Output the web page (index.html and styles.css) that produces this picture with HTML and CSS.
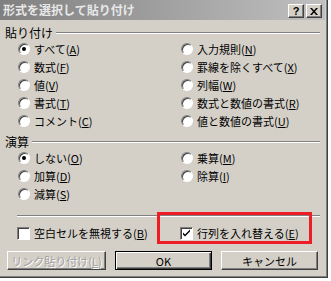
FILE: index.html
```html
<!DOCTYPE html>
<html lang="ja">
  <head>
    <meta charset="UTF-8" />
    <title>形式を選択して貼り付け</title>
    <link rel="stylesheet" href="styles.css">
  </head>
  <body>
    <div class="dialog">
      <div class="titlebar">
        <span class="title">形式を選択して貼り付け</span>
        <div class="title-buttons">
          <span class="tbtn">?</span>
          <span class="tbtn">
            <svg width="8" height="7" viewBox="0 0 8 7"><path d="M0 0h2l2 2.5 2-2.5h2l-3 3.5 3 3.5h-2l-2-2.5-2 2.5h-2l3-3.5z" fill="#000"/></svg>
          </span>
        </div>
      </div>

      <div class="content">
        <div class="group-label"><span>貼り付け</span><i class="rule"></i></div>
        <div class="options">
          <label class="opt"><span class="radio on"></span>すべて(<u>A</u>)</label>
          <label class="opt"><span class="radio"></span>入力規則(<u>N</u>)</label>
          <label class="opt"><span class="radio"></span>数式(<u>F</u>)</label>
          <label class="opt"><span class="radio"></span>罫線を除くすべて(<u>X</u>)</label>
          <label class="opt"><span class="radio"></span>値(<u>V</u>)</label>
          <label class="opt"><span class="radio"></span>列幅(<u>W</u>)</label>
          <label class="opt"><span class="radio"></span>書式(<u>T</u>)</label>
          <label class="opt"><span class="radio"></span>数式と数値の書式(<u>R</u>)</label>
          <label class="opt"><span class="radio"></span>コメント(<u>C</u>)</label>
          <label class="opt"><span class="radio"></span>値と数値の書式(<u>U</u>)</label>
        </div>

        <div class="group-label second"><span>演算</span><i class="rule"></i></div>
        <div class="options">
          <label class="opt"><span class="radio on"></span>しない(<u>O</u>)</label>
          <label class="opt"><span class="radio"></span>乗算(<u>M</u>)</label>
          <label class="opt"><span class="radio"></span>加算(<u>D</u>)</label>
          <label class="opt"><span class="radio"></span>除算(<u>I</u>)</label>
          <label class="opt"><span class="radio"></span>減算(<u>S</u>)</label>
        </div>

        <div class="separator"></div>

        <div class="checks">
          <label class="opt"><span class="checkbox"></span>空白セルを無視する(<u>B</u>)</label>
          <label class="opt">
            <span class="checkbox">
              <svg width="9" height="9" viewBox="0 0 9 9"><path d="M1 3.5l2 2 5-5v2l-5 5-2-2z" fill="#000"/></svg>
            </span>行列を入れ替える(<u>E</u>)
          </label>
          <div class="highlight"></div>
        </div>

        <div class="buttons">
          <button class="btn disabled">リンク貼り付け(<u>L</u>)</button>
          <button class="btn default">OK</button>
          <button class="btn">キャンセル</button>
        </div>
      </div>
    </div>
  </body>
</html>
```

FILE: styles.css
```css
/* Classic Windows dialog */
body {
  margin: 0;
  background: #fff;
  font-family: "Noto Sans CJK JP", "Noto Sans", sans-serif;
  font-size: 11px;
  color: #000;
}

.dialog {
  width: 327px;
  height: 277px;
  background: #d4d0c8;
  border-right: 1px solid #404040;
  border-bottom: 1px solid #404040;
  box-shadow: inset -1px -1px 0 #808080;
  display: flex;
  flex-direction: column;
}

.titlebar {
  height: 20px;
  margin-right: 2px;
  background: linear-gradient(to right, #808080, #c0c0c0);
  display: flex;
  align-items: center;
  justify-content: space-between;
  padding-left: 3px;
}

.title {
  color: #e8e8e8;
  font-weight: bold;
  font-size: 12px;
  line-height: 14px;
}

.title-buttons {
  display: flex;
  gap: 2px;
  padding-right: 3px;
  padding-top: 2px;
}

.tbtn {
  width: 16px;
  height: 14px;
  box-sizing: border-box;
  background: #d4d0c8;
  border: 1px solid;
  border-color: #fff #404040 #404040 #fff;
  box-shadow: inset -1px -1px 0 #808080;
  display: flex;
  align-items: center;
  justify-content: center;
  font-weight: bold;
  font-size: 11px;
  line-height: 12px;
  font-family: "Liberation Sans", sans-serif;
}

.content {
  padding: 0 7px 0 5px;
  display: flex;
  flex-direction: column;
}

.group-label {
  display: flex;
  align-items: center;
  height: 14px;
  margin-top: 6px;
  line-height: 14px;
  font-size: 12px;
}

.group-label.second {
  margin-top: 5px;
}

.rule {
  flex: 1;
  height: 0;
  border-top: 1px solid #808080;
  border-bottom: 1px solid #fff;
  margin-left: 3px;
}

.options {
  display: grid;
  grid-template-columns: 163px 1fr;
  grid-auto-rows: 18px;
  padding-left: 13px;
}

.opt {
  display: flex;
  align-items: center;
  line-height: 18px;
  white-space: nowrap;
}

u {
  text-decoration: underline;
  text-underline-offset: 1px;
}

.radio {
  width: 12px;
  height: 12px;
  box-sizing: border-box;
  border-radius: 50%;
  background: #fff;
  border: 1px solid;
  border-color: #808080 #fff #fff #808080;
  box-shadow: inset 1px 1px 0 #404040;
  margin-right: 4px;
  position: relative;
}

.radio.on::after {
  content: "";
  position: absolute;
  left: 3px;
  top: 3px;
  width: 4px;
  height: 4px;
  border-radius: 50%;
  background: #000;
}

.separator {
  margin-top: 12px;
  margin-left: 12px;
  border-top: 1px solid #808080;
  border-bottom: 1px solid #fff;
}

.checks {
  position: relative;
  display: grid;
  grid-template-columns: 163px 1fr;
  height: 18px;
  margin-top: 7px;
  padding-left: 12px;
}

.checkbox {
  width: 13px;
  height: 13px;
  box-sizing: border-box;
  background: #fff;
  border: 1px solid;
  border-color: #808080 #fff #fff #808080;
  box-shadow: inset 1px 1px 0 #404040;
  margin-right: 4px;
  display: flex;
  align-items: center;
  justify-content: center;
}

.highlight {
  position: absolute;
  left: 152px;
  top: -12px;
  width: 155px;
  height: 32px;
  box-sizing: border-box;
  border: 3px solid #ee1c24;
}

.buttons {
  display: flex;
  margin-top: 9px;
  padding-left: 2px;
  gap: 9px;
}

.btn {
  height: 19px;
  width: 97px;
  padding: 0;
  font-family: inherit;
  font-size: 11px;
  white-space: nowrap;
  background: #d4d0c8;
  border: 1px solid;
  border-color: #fff #404040 #404040 #fff;
  box-shadow: inset -1px -1px 0 #808080;
  color: #000;
}

.btn.disabled {
  width: 99px;
  color: #a0a0a0;
  text-shadow: 1px 1px 0 #fff;
}

.btn.default {
  border: 1px solid #000;
  box-shadow: inset 1px 1px 0 #fff, inset -1px -1px 0 #404040, inset -2px -2px 0 #808080;
}
```
